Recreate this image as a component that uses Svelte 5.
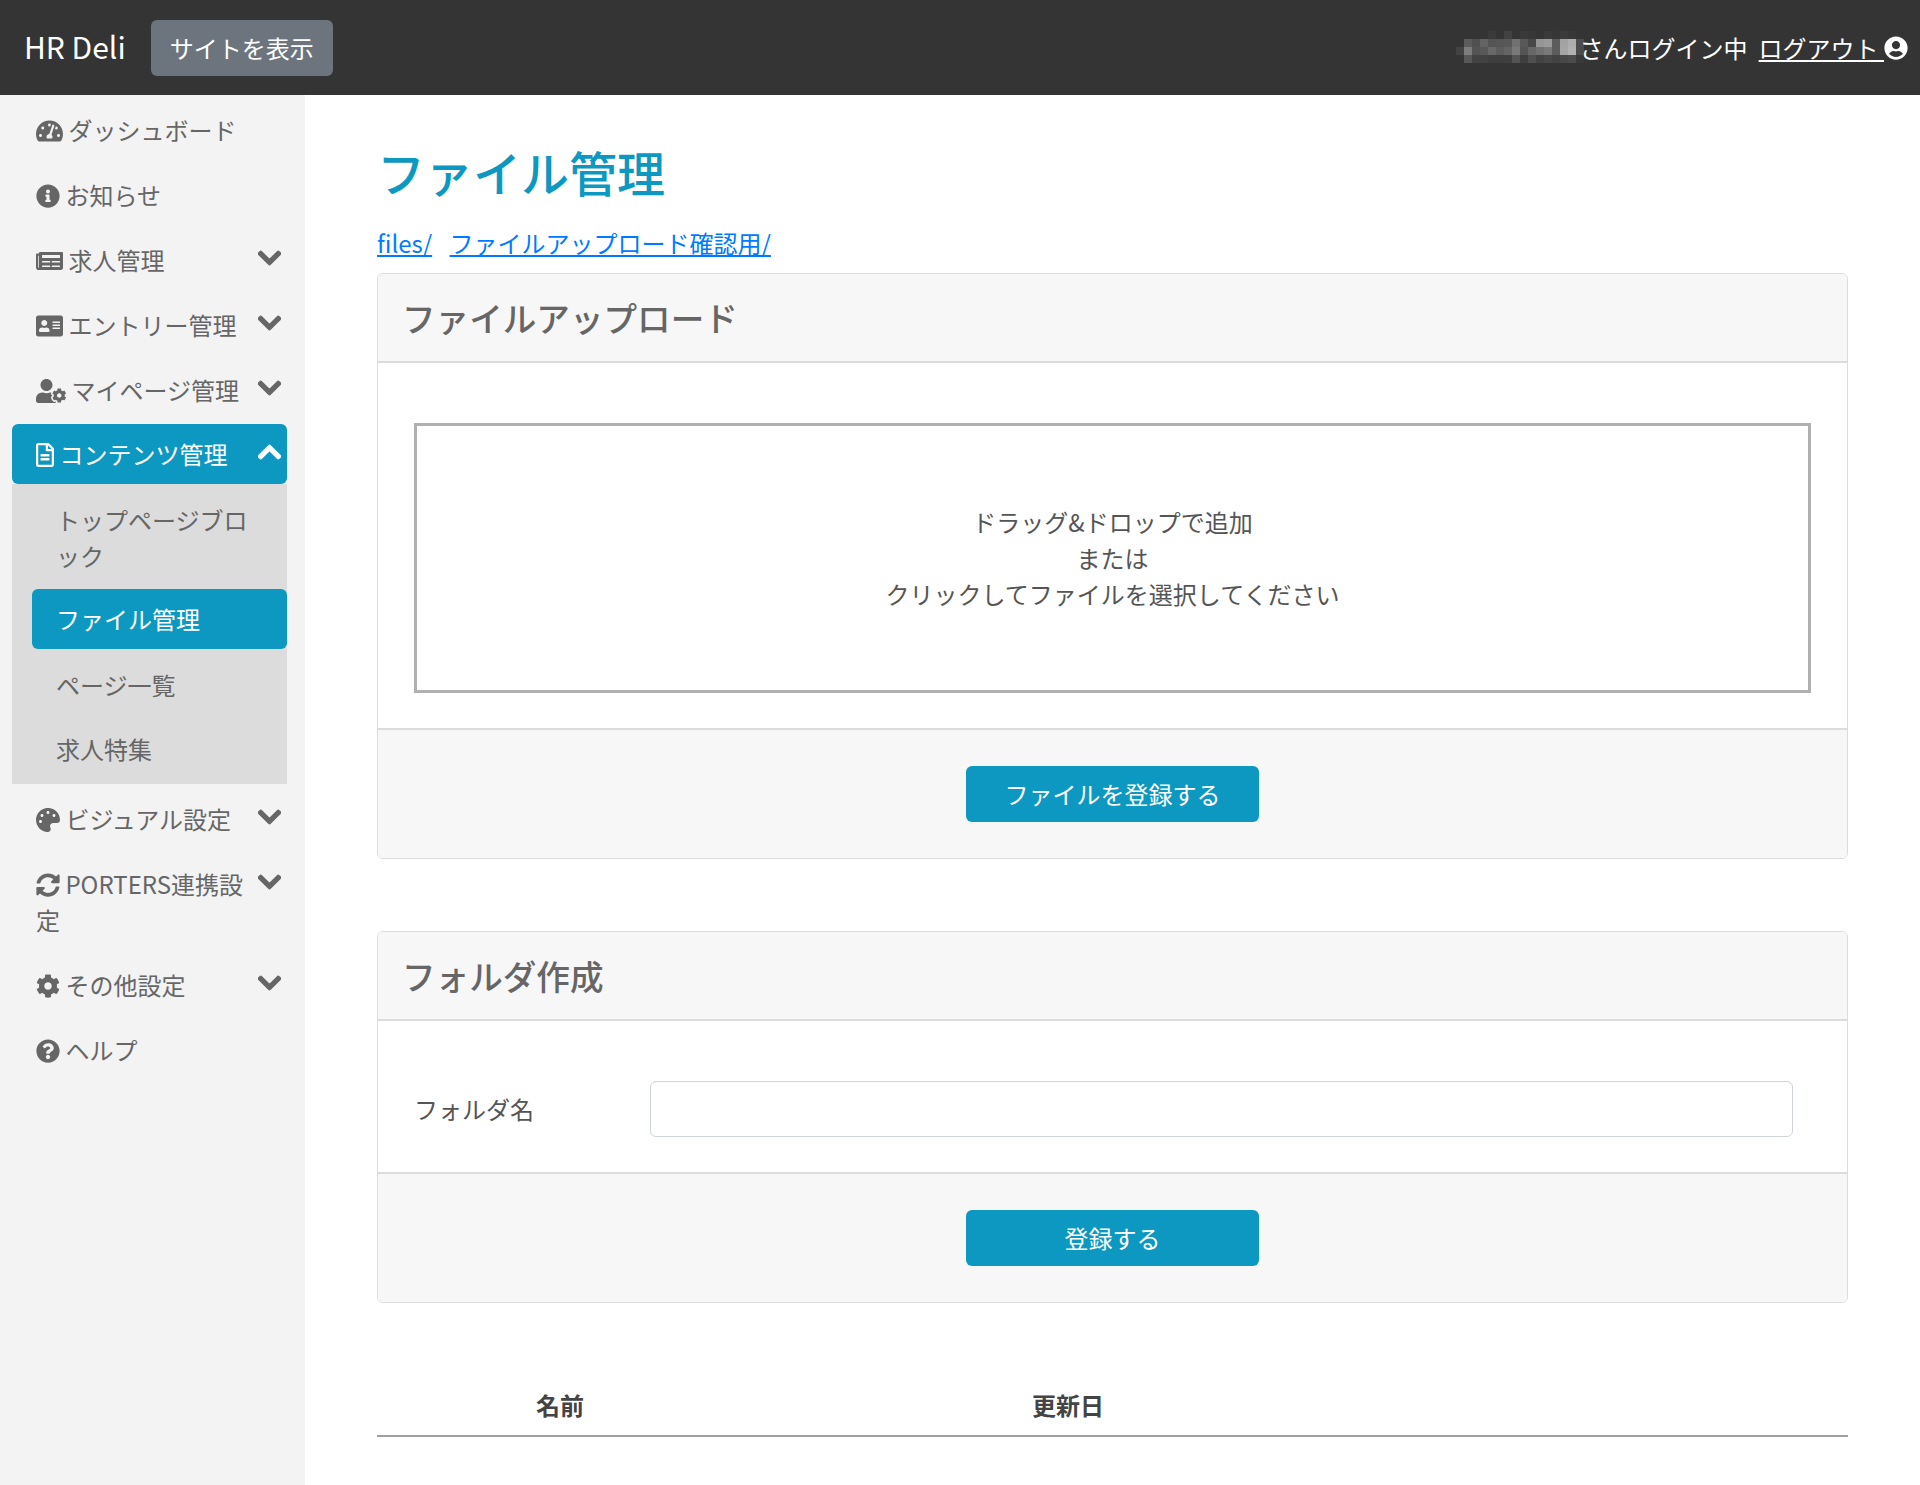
<script lang="ts">
  type Item = { label: string; icon?: string; vb?: string; open?: boolean; caret?: boolean };

  const P = {
    gauge: 'M288 32C128.94 32 0 160.94 0 320c0 52.8 14.25 102.26 39.06 144.8 5.61 9.62 16.3 15.2 27.44 15.2h443c11.14 0 21.83-5.58 27.44-15.2C561.75 422.26 576 372.8 576 320c0-159.06-128.94-288-288-288zm0 64c14.71 0 26.58 10.13 30.32 23.65-1.11 2.26-2.64 4.23-3.45 6.67l-9.22 27.67c-5.13 3.49-10.97 6.01-17.64 6.01-17.67 0-32-14.33-32-32S270.33 96 288 96zM96 384c-17.67 0-32-14.33-32-32s14.33-32 32-32 32 14.33 32 32-14.33 32-32 32zm48-160c-17.67 0-32-14.33-32-32s14.33-32 32-32 32 14.33 32 32-14.33 32-32 32zm246.77-72.41l-61.33 184C343.13 347.33 352 364.54 352 384c0 11.72-3.38 22.55-8.88 32H232.88c-5.5-9.45-8.88-20.28-8.88-32 0-33.94 26.5-61.43 59.9-63.59l61.34-184.01c4.17-12.56 17.73-19.45 30.36-15.17 12.57 4.19 19.35 17.79 15.17 30.36zm14.66 57.2l15.52-46.55c3.47-1.29 7.13-2.23 11.05-2.23 17.67 0 32 14.33 32 32s-14.33 32-32 32c-11.38-.01-20.89-6.28-26.57-15.22zM480 384c-17.67 0-32-14.33-32-32s14.33-32 32-32 32 14.33 32 32-14.33 32-32 32z',
    info: 'M256 8C119.043 8 8 119.083 8 256c0 136.997 111.043 248 248 248s248-111.003 248-248C504 119.083 392.957 8 256 8zm0 110c23.196 0 42 18.804 42 42s-18.804 42-42 42-42-18.804-42-42 18.804-42 42-42zm56 254c0 6.627-5.373 12-12 12h-88c-6.627 0-12-5.373-12-12v-24c0-6.627 5.373-12 12-12h12v-64h-12c-6.627 0-12-5.373-12-12v-24c0-6.627 5.373-12 12-12h64c6.627 0 12 5.373 12 12v100h12c6.627 0 12 5.373 12 12v24z',
    paper: 'M552 64H88c-13.255 0-24 10.745-24 24v8H24c-13.255 0-24 10.745-24 24v272c0 30.928 25.072 56 56 56h472c26.51 0 48-21.49 48-48V88c0-13.255-10.745-24-24-24zM56 400a8 8 0 0 1-8-8V144h16v248a8 8 0 0 1-8 8zm236-16H140c-6.627 0-12-5.373-12-12v-8c0-6.627 5.373-12 12-12h152c6.627 0 12 5.373 12 12v8c0 6.627-5.373 12-12 12zm208 0H348c-6.627 0-12-5.373-12-12v-8c0-6.627 5.373-12 12-12h152c6.627 0 12 5.373 12 12v8c0 6.627-5.373 12-12 12zm-208-96H140c-6.627 0-12-5.373-12-12v-8c0-6.627 5.373-12 12-12h152c6.627 0 12 5.373 12 12v8c0 6.627-5.373 12-12 12zm208 0H348c-6.627 0-12-5.373-12-12v-8c0-6.627 5.373-12 12-12h152c6.627 0 12 5.373 12 12v8c0 6.627-5.373 12-12 12zm0-96H140c-6.627 0-12-5.373-12-12v-40c0-6.627 5.373-12 12-12h360c6.627 0 12 5.373 12 12v40c0 6.627-5.373 12-12 12z',
    idcard: 'M528 32H48C21.5 32 0 53.5 0 80v352c0 26.500 21.500 48 48 48h480c26.500 0 48-21.500 48-48V80c0-26.500-21.500-48-48-48zM176 128c35.300 0 64 28.700 64 64s-28.700 64-64 64-64-28.700-64-64 28.700-64 64-64zm112 236.800c0 10.600-10 19.200-22.400 19.200H86.400C74 384 64 375.400 64 364.800v-19.200c0-31.800 30.100-57.600 67.200-57.600h5c12.300 5.100 25.700 8 39.800 8s27.600-2.900 39.800-8h5c37.100 0 67.200 25.800 67.200 57.600v19.200zM512 312c0 4.400-3.600 8-8 8H360c-4.400 0-8-3.600-8-8v-16c0-4.400 3.600-8 8-8h144c4.400 0 8 3.600 8 8v16zm0-64c0 4.400-3.600 8-8 8H360c-4.400 0-8-3.600-8-8v-16c0-4.400 3.600-8 8-8h144c4.400 0 8 3.600 8 8v16zm0-64c0 4.400-3.600 8-8 8H360c-4.400 0-8-3.600-8-8v-16c0-4.400 3.600-8 8-8h144c4.400 0 8 3.600 8 8v16z',
    usercog: 'M610.5 373.300c2.600-14.100 2.600-28.500 0-42.600l25.800-14.900c3-1.700 4.300-5.200 3.300-8.500-6.700-21.600-18.200-41.200-33.200-57.400-2.300-2.500-6-3.100-9-1.400l-25.800 14.900c-10.900-9.300-23.400-16.500-36.900-21.300v-29.800c0-3.400-2.400-6.400-5.700-7.100-22.300-5-45-4.800-66.200 0-3.300.7-5.700 3.700-5.700 7.100v29.800c-13.500 4.800-26 12-36.900 21.300l-25.800-14.900c-2.900-1.700-6.700-1.100-9 1.400-15 16.200-26.500 35.800-33.200 57.400-1 3.300.4 6.800 3.300 8.500l25.800 14.900c-2.600 14.100-2.600 28.500 0 42.600l-25.800 14.900c-3 1.700-4.300 5.200-3.300 8.500 6.700 21.600 18.200 41.100 33.200 57.400 2.300 2.500 6 3.100 9 1.400l25.800-14.900c10.900 9.300 23.400 16.500 36.900 21.300v29.800c0 3.400 2.400 6.400 5.700 7.100 22.300 5 45 4.800 66.200 0 3.300-.7 5.700-3.700 5.700-7.100v-29.800c13.500-4.800 26-12 36.900-21.300l25.800 14.900c2.900 1.700 6.700 1.100 9-1.400 15-16.200 26.500-35.800 33.200-57.400 1-3.300-.4-6.800-3.300-8.500l-25.800-14.900zM496 400.500c-26.800 0-48.500-21.800-48.500-48.500s21.800-48.500 48.500-48.500 48.500 21.800 48.500 48.500-21.700 48.500-48.500 48.500zM224 256c70.700 0 128-57.300 128-128S294.700 0 224 0 96 57.300 96 128s57.300 128 128 128zm201.200 226.500c-2.300-1.200-4.600-2.600-6.800-3.900l-7.900 4.600c-6 3.400-12.800 5.300-19.600 5.300-10.900 0-21.400-4.600-28.900-12.600-18.300-19.800-32.300-43.900-40.200-69.600-5.500-17.700 1.900-36.400 17.900-45.700l7.900-4.600c-.1-2.600-.1-5.200 0-7.800l-7.900-4.600c-16-9.200-23.400-28-17.900-45.700.9-2.900 2.200-5.800 3.200-8.700-3.800-.3-7.500-1.200-11.400-1.200h-16.700c-22.200 10.200-46.900 16-72.900 16s-50.600-5.800-72.900-16h-16.700C60.200 288 0 348.200 0 422.400V464c0 26.500 21.500 48 48 48h352c10.100 0 19.500-3.200 27.200-8.500-1.200-3.800-2-7.700-2-11.800v-9.200z',
    file: 'M288 248v28c0 6.600-5.400 12-12 12H108c-6.600 0-12-5.400-12-12v-28c0-6.600 5.400-12 12-12h168c6.600 0 12 5.400 12 12zm-12 72H108c-6.600 0-12 5.400-12 12v28c0 6.600 5.400 12 12 12h168c6.600 0 12-5.400 12-12v-28c0-6.600-5.400-12-12-12zm108-188.100V464c0 26.500-21.500 48-48 48H48c-26.500 0-48-21.500-48-48V48C0 21.500 21.500 0 48 0h204.100C264.800 0 277 5.100 286 14.100L369.900 98c9 8.900 14.100 21.200 14.100 33.900zm-128-80V128h76.100L256 51.900zM336 464V176H232c-13.300 0-24-10.700-24-24V48H48v416h288z',
    palette: 'M204.300 5C104.900 24.400 24.800 104.300 5.200 203.400c-37 187 131.700 326.400 258.800 306.700 41.200-6.400 61.400-54.600 42.500-91.700-23.100-45.400 9.900-98.400 60.900-98.400h79.700c35.800 0 64.800-29.600 64.900-65.300C511.500 97.100 368.100-26.900 204.300 5zM96 320c-17.700 0-32-14.300-32-32s14.300-32 32-32 32 14.300 32 32-14.300 32-32 32zm32-128c-17.700 0-32-14.300-32-32s14.300-32 32-32 32 14.300 32 32-14.300 32-32 32zm128-64c-17.700 0-32-14.300-32-32s14.300-32 32-32 32 14.300 32 32-14.300 32-32 32zm128 64c-17.700 0-32-14.300-32-32s14.300-32 32-32 32 14.300 32 32-14.300 32-32 32z',
    sync: 'M370.720 133.280C339.458 104.008 298.888 87.962 255.848 88c-77.458.068-144.328 53.178-162.791 126.850-1.344 5.363-6.122 9.150-11.651 9.150H24.103c-7.498 0-13.194-6.807-11.807-14.176C33.933 94.924 134.813 8 256 8c66.448 0 126.791 26.136 171.315 68.685L463.030 40.970C478.149 25.851 504 36.559 504 57.941V192c0 13.255-10.745 24-24 24H345.941c-21.382 0-32.090-25.851-16.971-40.971l41.750-41.749zM32 296h134.059c21.382 0 32.090 25.851 16.971 40.971l-41.750 41.750c31.262 29.273 71.835 45.319 114.876 45.280 77.418-.07 144.315-53.144 162.787-126.849 1.344-5.363 6.122-9.150 11.651-9.150h57.304c7.498 0 13.194 6.807 11.807 14.176C478.067 417.076 377.187 504 256 504c-66.448 0-126.791-26.136-171.315-68.685L48.970 471.030C33.851 486.149 8 475.441 8 454.059V320c0-13.255 10.745-24 24-24z',
    cog: 'M487.400 315.700l-42.600-24.600c4.300-23.200 4.300-47 0-70.200l42.600-24.600c4.900-2.800 7.100-8.600 5.500-14-11.100-35.600-30-67.800-54.700-94.600-3.800-4.100-10-5.100-14.800-2.300L380.800 110c-17.900-15.400-38.500-27.300-60.800-35.100V25.800c0-5.600-3.900-10.500-9.400-11.700-36.700-8.200-74.300-7.800-109.200 0-5.500 1.200-9.400 6.100-9.400 11.700V75c-22.200 7.900-42.800 19.800-60.800 35.100L88.700 85.500c-4.900-2.800-11-1.900-14.800 2.300-24.700 26.700-43.600 58.900-54.700 94.600-1.700 5.400.6 11.200 5.500 14L67.300 221c-4.300 23.200-4.300 47 0 70.200l-42.600 24.600c-4.900 2.800-7.100 8.600-5.500 14 11.100 35.600 30 67.800 54.700 94.600 3.800 4.100 10 5.100 14.800 2.300l42.600-24.600c17.900 15.400 38.500 27.300 60.800 35.100v49.200c0 5.600 3.900 10.500 9.400 11.700 36.700 8.200 74.300 7.800 109.200 0 5.500-1.200 9.400-6.100 9.400-11.700v-49.200c22.200-7.900 42.800-19.800 60.800-35.100l42.600 24.600c4.900 2.800 11 1.900 14.800-2.300 24.700-26.700 43.600-58.900 54.700-94.600 1.500-5.500-.7-11.300-5.600-14.100zM256 336c-44.100 0-80-35.900-80-80s35.900-80 80-80 80 35.900 80 80-35.900 80-80 80z',
    help: 'M504 256c0 136.997-111.043 248-248 248S8 392.997 8 256C8 119.083 119.043 8 256 8s248 111.083 248 248zM262.655 90c-54.497 0-89.255 22.957-116.549 63.758-3.536 5.286-2.353 12.415 2.715 16.258l34.699 26.310c5.205 3.947 12.621 3.008 16.665-2.122 17.864-22.658 30.113-35.797 57.303-35.797 20.429 0 45.698 13.148 45.698 32.958 0 14.976-12.363 22.667-32.534 33.976C247.128 238.528 216 254.941 216 296v4c0 6.627 5.373 12 12 12h56c6.627 0 12-5.373 12-12v-1.333c0-28.462 83.186-29.647 83.186-106.667 0-58.002-60.165-102-116.531-102zM256 338c-25.365 0-46 20.635-46 46 0 25.364 20.635 46 46 46s46-20.636 46-46c0-25.365-20.635-46-46-46z',
    down: 'M207.029 381.476L12.686 187.132c-9.373-9.373-9.373-24.569 0-33.941l22.667-22.667c9.357-9.357 24.522-9.375 33.901-.04L224 284.505l154.745-154.021c9.379-9.335 24.544-9.317 33.901.04l22.667 22.667c9.373 9.373 9.373 24.569 0 33.941L240.971 381.476c-9.373 9.372-24.569 9.372-33.942 0z',
    up: 'M240.971 130.524l194.343 194.343c9.373 9.373 9.373 24.569 0 33.941l-22.667 22.667c-9.357 9.357-24.522 9.375-33.901.04L224 227.495 69.255 381.516c-9.379 9.335-24.544 9.317-33.901-.04l-22.667-22.667c-9.373-9.373-9.373-24.569 0-33.941L207.030 130.525c9.372-9.373 24.568-9.373 33.941-.001z',
    user: 'M248 8C111 8 0 119 0 256s111 248 248 248 248-111 248-248S385 8 248 8zm0 96c48.600 0 88 39.400 88 88s-39.400 88-88 88-88-39.400-88-88 39.400-88 88-88zm0 344c-58.700 0-111.300-26.600-146.500-68.200 18.800-35.400 55.600-59.800 98.500-59.800 2.400 0 4.800.4 7.100 1.100 13 4.200 26.600 6.900 40.900 6.900 14.300 0 28-2.700 40.900-6.900 2.300-.7 4.700-1.100 7.100-1.100 42.900 0 79.700 24.400 98.500 59.800C359.300 421.400 306.700 448 248 448z',
  };

  const before: Item[] = [
    { label: 'ダッシュボード', icon: P.gauge, vb: '0 0 576 512' },
    { label: 'お知らせ', icon: P.info, vb: '0 0 512 512' },
    { label: '求人管理', icon: P.paper, vb: '0 0 576 512', caret: true },
    { label: 'エントリー管理', icon: P.idcard, vb: '0 0 576 512', caret: true },
    { label: 'マイページ管理', icon: P.usercog, vb: '0 0 640 512', caret: true },
  ];

  const after: Item[] = [
    { label: 'ビジュアル設定', icon: P.palette, vb: '0 0 512 512', caret: true },
    { label: 'PORTERS連携設定', icon: P.sync, vb: '0 0 512 512', caret: true },
    { label: 'その他設定', icon: P.cog, vb: '0 0 512 512', caret: true },
    { label: 'ヘルプ', icon: P.help, vb: '0 0 512 512' },
  ];

  const sub = [
    { label: 'トップページブロック' },
    { label: 'ファイル管理', active: true },
    { label: 'ページ一覧' },
    { label: '求人特集' },
  ];

  // mosaic over the user's name in the header
  const mosaic = [
    [0,0,0,0,.04,0,.07,0,.03,.02,0,.03,.01,.04,.02,0],
    [0,.2,.14,.24,.16,.17,.18,.3,.18,.1,.48,.5,.2,.55,.6,.12],
    [.08,.36,.16,.18,.26,.2,.24,.34,.16,.25,.3,.34,.2,.56,.62,.12],
    [0,.18,.08,.07,.05,.05,.06,.16,.06,.14,.08,.1,.08,.1,.12,.03],
  ];
</script>

{#snippet navLink(item: Item)}
  <a class="nav-link" href="#top">
    {#if item.caret}
      <svg class="caret" viewBox="0 0 448 512"><path d={P.down} /></svg>
    {/if}
    <svg class="ico" viewBox={item.vb}><path d={item.icon} /></svg>
    {item.label}
  </a>
{/snippet}

<header class="topbar">
  <a class="brand" href="#top">HR Deli</a>
  <a class="btn-site" href="#top">サイトを表示</a>
  <div class="account">
    <span class="mosaic" aria-hidden="true">
      {#each mosaic as row}
        {#each row as v}
          <i style="background: rgba(255,255,255,{v})"></i>
        {/each}
      {/each}
    </span>
    <span class="who">さんログイン中</span>
    <a class="logout" href="#top">ログアウト&nbsp;</a>
    <svg class="user" viewBox="0 0 496 512"><path d={P.user} /></svg>
  </div>
</header>

<div class="layout">
  <nav class="sidebar">
    <ul class="nav">
      {#each before as item}
        <li>{@render navLink(item)}</li>
      {/each}
      <li class="open">
        <a class="nav-link active" href="#top">
          <svg class="caret" viewBox="0 0 448 512"><path d={P.up} /></svg>
          <svg class="ico" viewBox="0 0 384 512"><path d={P.file} /></svg>
          コンテンツ管理
        </a>
        <ul class="subnav">
          {#each sub as s}
            <li><a class="sub-link" class:active={s.active} href="#top">{s.label}</a></li>
          {/each}
        </ul>
      </li>
      {#each after as item}
        <li>{@render navLink(item)}</li>
      {/each}
    </ul>
  </nav>

  <main class="content">
    <h1>ファイル管理</h1>
    <div class="crumbs">
      <a href="#top">files/</a>
      <a href="#top">ファイルアップロード確認用/</a>
    </div>

    <section class="card">
      <h2 class="card-head">ファイルアップロード</h2>
      <div class="card-body">
        <div class="dropzone">
          ドラッグ&amp;ドロップで追加<br />または<br />クリックしてファイルを選択してください
        </div>
      </div>
      <div class="card-foot"><button class="btn-main" type="button">ファイルを登録する</button></div>
    </section>

    <section class="card">
      <h2 class="card-head">フォルダ作成</h2>
      <div class="card-body form-row">
        <label for="folder">フォルダ名</label>
        <input id="folder" type="text" />
      </div>
      <div class="card-foot"><button class="btn-main" type="button">登録する</button></div>
    </section>

    <table>
      <thead>
        <tr><th class="name">名前</th><th class="date">更新日</th><th></th></tr>
      </thead>
    </table>
  </main>
</div>

<style>
  :global(body) {
    margin: 0;
    background: #fff;
    color: #555;
    font-family: "Noto Sans CJK JP", "Noto Sans", sans-serif;
    font-size: 24px;
    line-height: 36px;
  }

  .topbar {
    display: flex;
    align-items: center;
    height: 95px;
    padding: 0 12px 0 24px;
    box-sizing: border-box;
    background: #343434;
    color: #fff;
  }

  .brand {
    color: #fff;
    font-size: 30px;
    text-decoration: none;
    margin-right: 25px;
    margin-top: -4px;
  }

  .btn-site {
    padding: 10px 19px;
    background: #6c757d;
    border-radius: 6px;
    color: #fff;
    text-decoration: none;
  }

  .account {
    display: flex;
    align-items: center;
    margin-left: auto;
  }

  .mosaic {
    display: grid;
    grid-template-columns: repeat(16, 8px);
    grid-auto-rows: 8px;
    margin-right: -4px;
    margin-top: -1px;
  }

  .who { margin-right: 11px; }

  .logout {
    color: #fff;
  }

  .user {
    width: 24px;
    height: 24px;
    fill: #fff;
  }

  .layout {
    display: flex;
    min-height: 1390px;
  }

  .sidebar {
    flex: 0 0 305px;
    box-sizing: border-box;
    padding: 5px 18px 0 12px;
    background: #f3f3f3;
  }

  .nav,
  .subnav {
    list-style: none;
    margin: 0;
    padding: 0;
  }

  .nav > li { margin-bottom: 4.9px; }

  .nav-link {
    display: block;
    padding: 12px 6px 12px 24px;
    border-radius: 6px;
    color: #666;
    text-decoration: none;
  }

  .nav-link.active {
    background: #0d98c2;
    color: #fff;
  }

  .ico {
    height: 24px;
    width: auto;
    fill: currentColor;
    vertical-align: -3px;
  }

  .caret {
    float: right;
    width: 23px;
    height: 26px;
    margin-top: 3px;
    fill: currentColor;
    stroke: currentColor;
    stroke-width: 24px;
  }

  .subnav {
    padding: 4.5px 0 6px 20px;
    background: #dcdcdc;
  }

  .subnav li { margin-bottom: 4.5px; }

  .subnav li:last-child { margin-bottom: 0; }

  .sub-link {
    display: block;
    padding: 13px 24px 11px;
    border-radius: 6px;
    color: #666;
    text-decoration: none;
  }

  .sub-link.active {
    background: #0d98c2;
    color: #fff;
    padding: 12px 24px;
  }

  .content {
    flex: 1;
    padding: 48px 72px 0;
    min-width: 0;
  }

  h1 {
    margin: 0 0 24px;
    color: #0d98c2;
    font-size: 48px;
    font-weight: 500;
    line-height: 1.2;
  }

  .crumbs {
    margin-bottom: 12px;
  }

  .crumbs a {
    margin-right: 12px;
    color: #007bff;
  }

  .card {
    margin-bottom: 72px;
    border: 1px solid #dcdcdc;
    border-radius: 6px;
    overflow: hidden;
  }

  .card-head {
    margin: 0;
    padding: 24px 24px 23px;
    background: #f7f7f7;
    border-bottom: 2px solid #dcdcdc;
    color: #666;
    font-size: 33.6px;
    font-weight: 500;
    line-height: 40px;
  }

  .card-body {
    padding: 60px 36px 35px;
  }

  .dropzone {
    box-sizing: border-box;
    height: 270px;
    padding-top: 78px;
    border: 3px solid #b0b0b0;
    text-align: center;
  }

  .form-row {
    display: flex;
    align-items: center;
    padding-right: 54px;
  }

  label {
    flex: 0 0 236px;
  }

  input {
    flex: 1;
    box-sizing: border-box;
    height: 56px;
    border: 1.5px solid #ced4da;
    border-radius: 6px;
    min-width: 0;
  }

  .card-foot {
    padding: 36px 0;
    background: #f7f7f7;
    border-top: 2px solid #dcdcdc;
    text-align: center;
  }

  .btn-main {
    display: block;
    width: 293px;
    height: 56px;
    margin: 0 auto;
    padding: 0;
    border: 0;
    border-radius: 6px;
    background: #0d98c2;
    color: #fff;
    font: inherit;
  }

  table {
    width: 100%;
    border-collapse: collapse;
  }

  th {
    padding: 12px 0;
    border-bottom: 2px solid #a0a0a0;
    color: #444;
    font-weight: 700;
    text-align: center;
  }

  .name { width: 366px; }
  .date { width: 650px; }
</style>
